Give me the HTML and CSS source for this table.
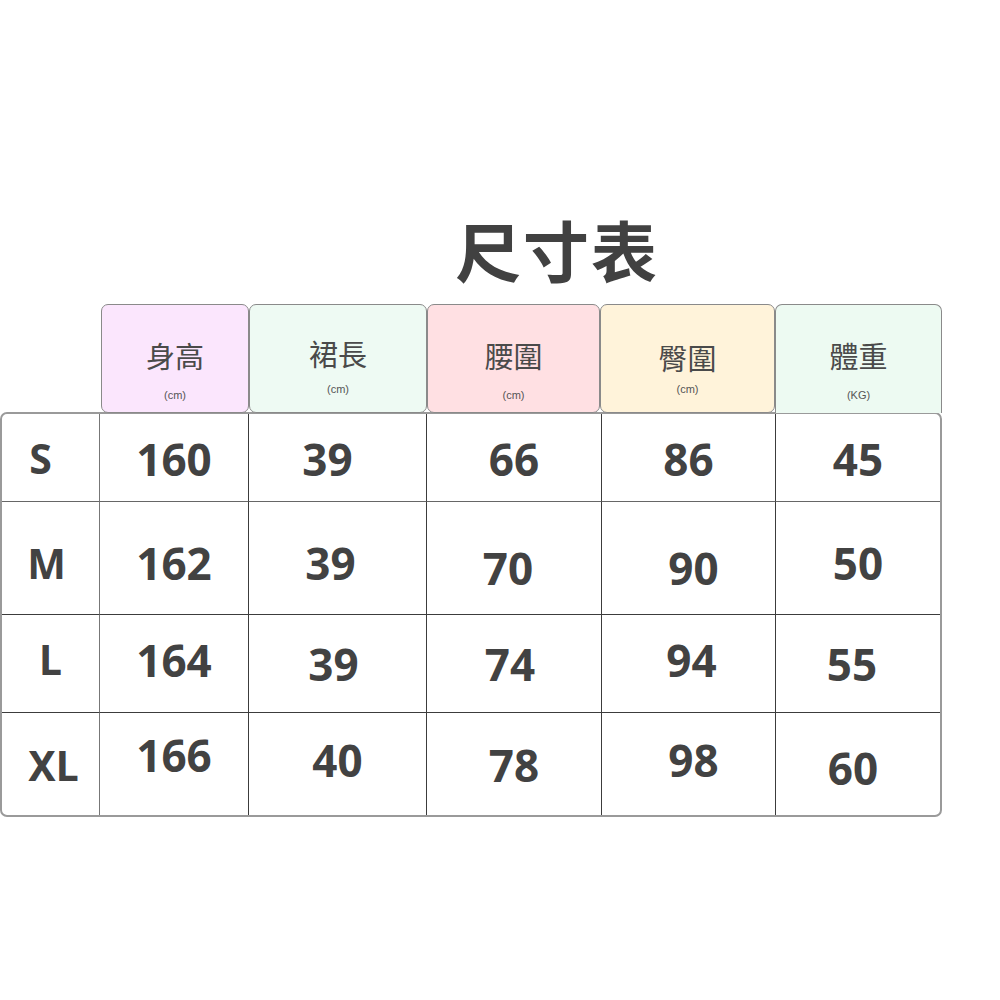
FILE: index.html
```html
<!DOCTYPE html>
<html lang="zh-Hant">
<head>
<meta charset="utf-8">
<title>尺寸表</title>
<link rel="stylesheet" href="styles.css">
</head>
<body>
<main class="page">
  <h1 class="title">尺寸表</h1>
  <div class="head">
    <div class="blank"></div>
    <div class="hc pink"><span class="hname">身高</span><span class="unit">(cm)</span></div>
    <div class="hc mint up"><span class="hname">裙長</span><span class="unit">(cm)</span></div>
    <div class="hc rose"><span class="hname">腰圍</span><span class="unit">(cm)</span></div>
    <div class="hc cream up2"><span class="hname">臀圍</span><span class="unit">(cm)</span></div>
    <div class="hc mint2 open"><span class="hname">體重</span><span class="unit">(KG)</span></div>
  </div>
  <div class="table">
    <div class="c sz dS lf10">S</div>
    <div class="c dS">160</div>
    <div class="c dS lf10">39</div>
    <div class="c dS">66</div>
    <div class="c dS">86</div>
    <div class="c dS">45</div>

    <div class="c sz dM lf4">M</div>
    <div class="c dM">162</div>
    <div class="c dM lf7">39</div>
    <div class="c dM2 lf6">70</div>
    <div class="c dM2 rt5">90</div>
    <div class="c dM">50</div>

    <div class="c sz">L</div>
    <div class="c">164</div>
    <div class="c dL lf4">39</div>
    <div class="c dL lf4">74</div>
    <div class="c rt3">94</div>
    <div class="c dL lf6">55</div>

    <div class="c sz dX1 rt3">XL</div>
    <div class="c uX">166</div>
    <div class="c">40</div>
    <div class="c dX1">78</div>
    <div class="c rt5">98</div>
    <div class="c dX2 lf5">60</div>
  </div>
</main>
</body>
</html>
```
FILE: styles.css
```css
* { box-sizing: border-box; }
html, body { margin: 0; padding: 0; background: #fff; }
body {
  font-family: "Noto Sans", "Noto Sans CJK TC", sans-serif;
  color: #404040;
}
.page {
  width: 942px;
  padding-top: 208px;
}
.title {
  margin: 0 0 16px;
  padding-left: 172px;
  text-align: center;
  font-family: "Noto Sans CJK TC", sans-serif;
  font-weight: 700;
  font-size: 66px;
  line-height: 80px;
  color: #414141;
  letter-spacing: 2px;
}
.head {
  display: grid;
  grid-template-columns: 101px 148px 178px 173px 175px 167px;
  height: 108px;
}
.hc {
  display: flex;
  flex-direction: column;
  align-items: center;
  border: 1.5px solid #8a8a8a;
  border-radius: 7px;
  padding-top: 32px;
  margin-bottom: -1px;
  position: relative;
  z-index: 1;
}
.hc.up { padding-top: 30px; }
.hc.up2 { padding-top: 34px; }
.hc.open {
  border-bottom: none;
  border-radius: 7px 7px 0 0;
}
.hname {
  font-family: "Noto Sans CJK TC", sans-serif;
  font-size: 29px;
  line-height: 36px;
  color: #4a4a4a;
}
.unit {
  margin-top: 15px;
  font-family: "Liberation Sans", sans-serif;
  font-size: 11px;
  line-height: 14px;
  color: #555;
}
.hc.up .unit { margin-top: 11px; }
.hc.up2 .unit { margin-top: 7px; }
.pink { background: #fbe6fd; }
.mint { background: #eefaf3; }
.rose { background: #ffe0e3; }
.cream { background: #fff3da; }
.mint2 { background: #edfaf2; }

.table {
  display: grid;
  grid-template-columns: 98px 149px 178px 175px 174px 1fr;
  grid-template-rows: 88px 113px 98px 102px;
  border: 2px solid #9a9a9a;
  border-radius: 7px;
  overflow: hidden;
  width: 942px;
}
.c {
  display: flex;
  align-items: center;
  justify-content: center;
  border-right: 1px solid #3c3c3c;
  border-bottom: 1px solid #3c3c3c;
  font-weight: 700;
  font-size: 44px;
  line-height: 1;
  color: #424242;
  padding-bottom: 8px;
}
.c:nth-child(6n) { border-right: none; }
.c:nth-child(n+19) { border-bottom: none; }
.c:nth-child(6n+1) { border-right-color: #777; }
.c:nth-child(-n+6) { border-bottom-color: #666; }
.sz { font-size: 41px; }

.dS { padding-top: 10px; }
.dM { padding-top: 18px; }
.dM2 { padding-top: 27px; }
.dL { padding-top: 8px; }
.dX1 { padding-top: 10px; }
.dX2 { padding-top: 16px; }
.uX { padding-bottom: 18px; }
.lf10 { padding-right: 20px; }
.lf7 { padding-right: 14px; }
.lf6 { padding-right: 12px; }
.lf5 { padding-right: 10px; }
.lf4 { padding-right: 8px; }
.rt3 { padding-left: 6px; }
.rt5 { padding-left: 10px; }
```
